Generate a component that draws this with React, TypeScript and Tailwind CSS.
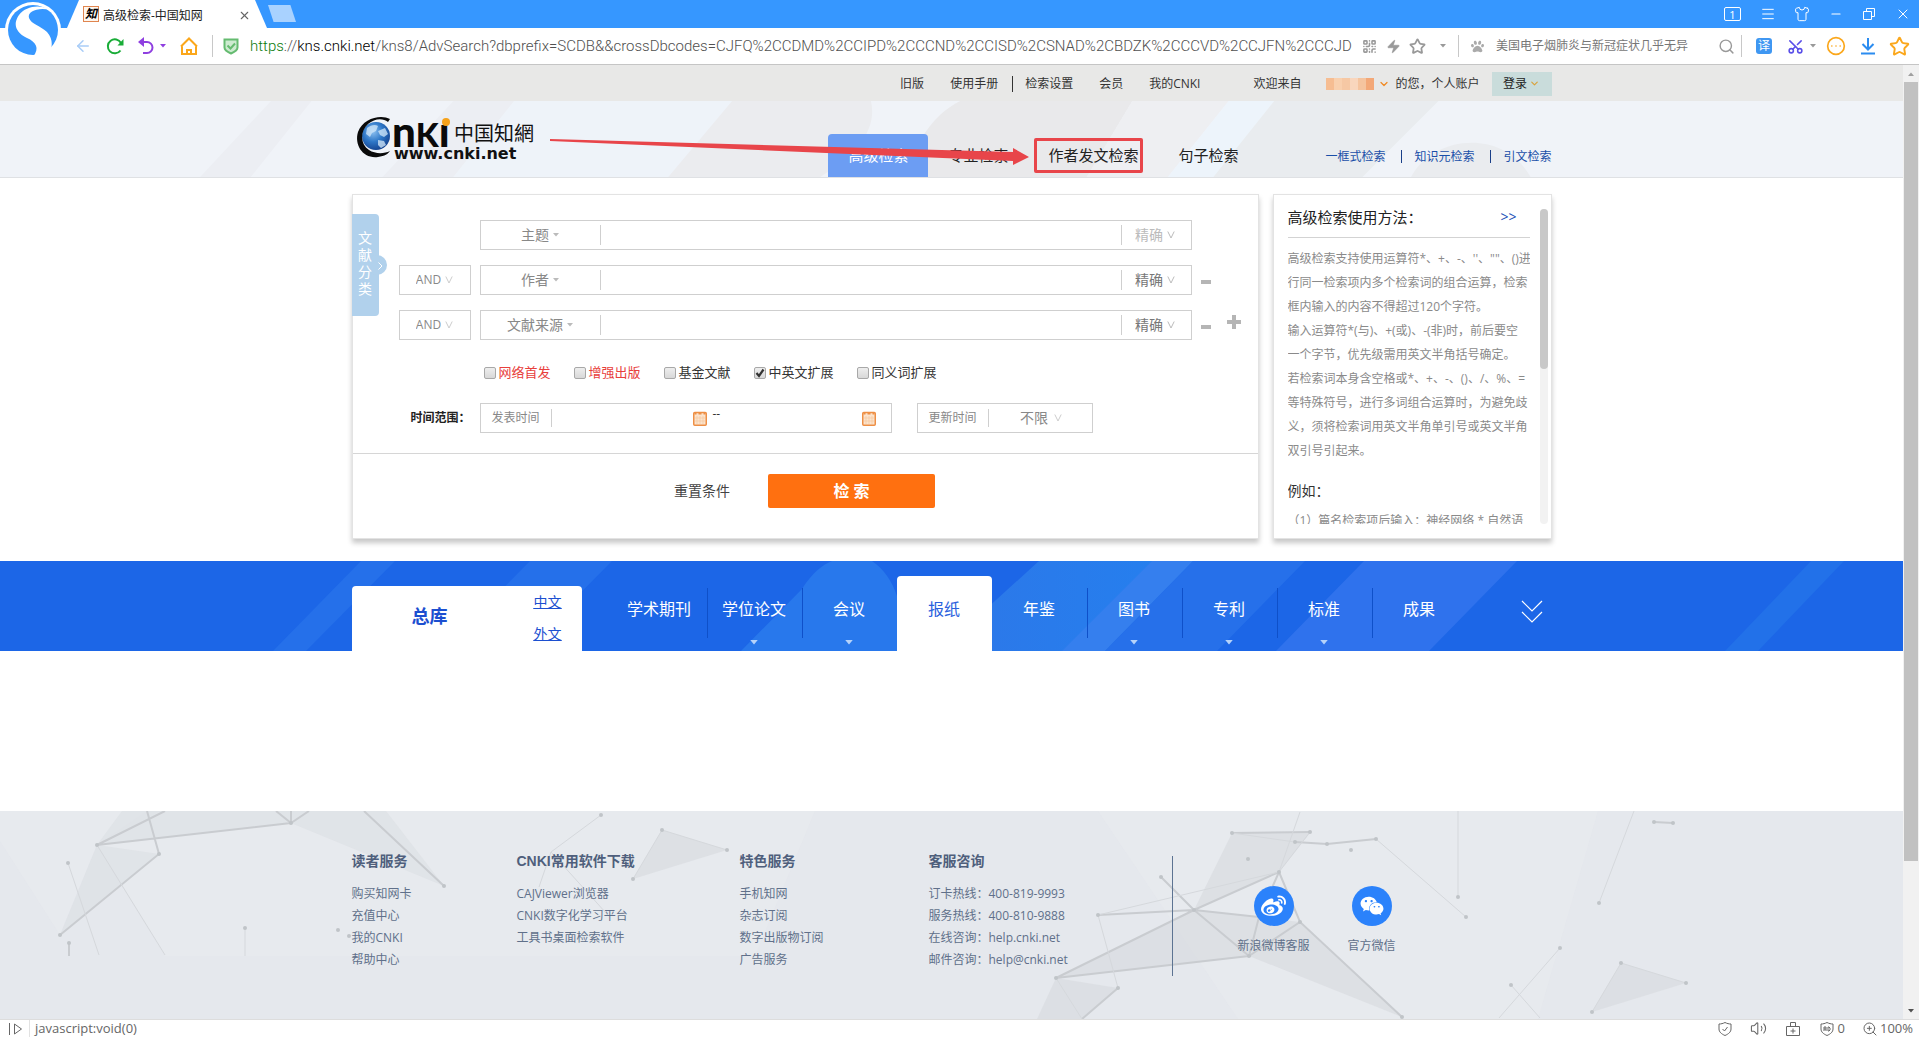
import React from "react";
import {
  ArrowLeft,
  ChevronDown,
  CircleEllipsis,
  Menu,
  Minus,
  QrCode,
  Scissors,
  Search,
  Shirt,
  Star,
  Volume2,
  X,
  Zap,
  ZoomIn,
} from "lucide-react";
import { FaPaw, FaWeibo, FaWeixin } from "react-icons/fa";

const Caret = ({ className = "" }: { className?: string }) => (
  <svg viewBox="0 0 6 4" className={`h-1 w-1.5 ${className}`} fill="currentColor" aria-hidden="true">
    <path d="M0 0h6L3 3.5z" />
  </svg>
);

const Vee = ({ className = "" }: { className?: string }) => (
  <svg viewBox="0 0 8 8" className={`h-2 w-2 ${className}`} fill="none" stroke="currentColor" aria-hidden="true">
    <path d="M.8 .5 4 7 7.200 .5" />
  </svg>
);

const BrowserLogo = () => (
  <svg viewBox="0 0 60 60" className="absolute left-1 top-0.5 z-10 h-[60px] w-[60px]" aria-hidden="true">
    <circle cx="29" cy="28" r="28" fill="#fff" />
    <circle cx="29" cy="28" r="25" fill="#3697ff" />
    <path
      d="M46 8C36 2 22 4 15 13C8 23 13 31 23 36C32 40 36 46 29 55L45 53C48 46 50 38 43 30C37 24 27 22 25 16C23 9 35 5 46 8Z"
      fill="#fff"
    />
  </svg>
);

const Favicon = () => (
  <span className="grid h-4 w-4 place-items-center border border-[#e0854f] bg-[#fdf6ee] text-xs leading-none font-bold text-black italic">
    知
  </span>
);

function TabStrip() {
  return (
    <div className="flex h-7 items-stretch bg-[#3697ff] pl-[67px] text-white">
      <div className="flex w-[200px] items-center bg-white pr-4 pl-4 text-xs text-[#222] [clip-path:polygon(6%_0,94%_0,100%_100%,0_100%)]">
        <Favicon />
        <span className="ml-1 flex-1 pt-1">高级检索-中国知网</span>
        <button aria-label="关闭标签" className="pt-0.5 text-[#666]">
          <X size={13} strokeWidth={2} />
        </button>
      </div>
      <button
        aria-label="新标签"
        className="mt-[5px] ml-px h-[17px] w-7 bg-[#a9d2ff] [clip-path:polygon(0_0,80%_0,100%_100%,20%_100%)]"
      />
      <div className="ml-auto flex items-center pr-2">
        <button className="mr-[19px] grid h-3.5 w-[17px] place-items-center rounded-xs border border-white text-[11px] leading-none">1</button>
        <button aria-label="菜单" className="mr-[18px]"><Menu size={16} strokeWidth={1.5} /></button>
        <button aria-label="皮肤" className="mr-[19px]"><Shirt size={16} strokeWidth={1.5} /></button>
        <button aria-label="最小化" className="mr-5"><Minus size={14} strokeWidth={1.8} /></button>
        <button aria-label="还原" className="mr-5">
          <svg viewBox="0 0 12 12" className="h-3 w-3" fill="none" stroke="currentColor">
            <path d="M.5 3.500h8v8h-8zM3.500 3V.5h8v8H9" />
          </svg>
        </button>
        <button aria-label="关闭"><X size={16} strokeWidth={1.5} /></button>
      </div>
    </div>
  );
}

function AddressBar() {
  return (
    <div className="flex h-9 items-center bg-white pr-[9px] pl-[74px] text-[#999]">
      <button aria-label="后退" className="text-[#a9cdf7]"><ArrowLeft size={18} strokeWidth={2} /></button>
      <button aria-label="刷新" className="ml-3.5">
        <svg viewBox="0 0 18 18" className="h-[18px] w-[18px]" fill="none" stroke="#18ac37" strokeWidth="2">
          <path d="M14.500 13.500A7 7 0 1 1 15 6" />
          <path d="M17.500 2v6.500h-6z" fill="#18ac37" stroke="none" />
        </svg>
      </button>
      <button aria-label="撤销" className="ml-3.5">
        <svg viewBox="0 0 16 18" className="h-[18px] w-4" fill="none" stroke="#8f3fe0" strokeWidth="2">
          <path d="M3 5h6a5 5 0 0 1 0 11H5" />
          <path d="M6 0v10L0 5z" fill="#8f3fe0" stroke="none" />
        </svg>
      </button>
      <Caret className="ml-1.5 text-[#8f3fe0]" />
      <button aria-label="主页" className="ml-3.5">
        <svg viewBox="0 0 18 18" className="h-[18px] w-[18px]" fill="none" stroke="#fba71b" strokeWidth="2">
          <path d="M2 9.500V17h14V9.500M1 9.500l8-8 8 8M7 17v-4h4v4" />
        </svg>
      </button>
      <span className="ml-3.5 h-[22px] w-px bg-[#c8c8c8]" />
      <svg viewBox="0 0 16 17" className="ml-2.5 h-[17px] w-4 shrink-0" fill="#cdebd0" stroke="#65bb70" strokeWidth="2">
        <path d="M1.500 1.500h13v8c0 3-3 4.500-6.500 6-3.500-1.500-6.500-3-6.500-6z" />
        <path d="m4.500 7.500 3 3 4.500-5" fill="none" />
      </svg>
      <div
        role="textbox"
        aria-label="地址"
        tabIndex={0}
        className="ml-[11px] w-0 flex-1 font-[Roboto,sans-serif] text-[15px] font-light whitespace-nowrap text-[#505050]"
      >
        <span className="text-[#0a7a0a]">https</span>://<span className="text-black">kns.cnki.net</span>
        /kns8/AdvSearch?dbprefix=SCDB&amp;&amp;crossDbcodes=CJFQ%2CCDMD%2CCIPD%2CCCND%2CCISD%2CSNAD%2CBDZK%2CCCVD%2CCJFN%2CCCJD
      </div>
      <button aria-label="二维码" className="ml-1.5"><QrCode size={15} strokeWidth={2.500} /></button>
      <button aria-label="加速" className="ml-[9px]"><Zap size={15} fill="currentColor" strokeWidth={1} /></button>
      <button aria-label="收藏" className="ml-2"><Star size={17} strokeWidth={2.500} /></button>
      <Caret className="ml-3.5" />
      <span className="ml-3 h-[22px] w-px bg-[#c8c8c8]" />
      <FaPaw size={13} className="ml-3 text-[#aaa]" />
      <input
        aria-label="搜索"
        defaultValue="美国电子烟肺炎与新冠症状几乎无异"
        className="ml-3 w-[222px] text-xs text-[#777] outline-none"
      />
      <button aria-label="搜索"><Search size={17} strokeWidth={2} /></button>
      <span className="ml-1.5 h-[22px] w-px bg-[#c8c8c8]" />
      <button className="ml-3.5 grid h-4 w-4 place-items-center rounded-[3px] bg-[#3f97f2] text-xs leading-none text-white">译</button>
      <button aria-label="截图" className="ml-[15px] -rotate-90 text-[#5a4fe8]"><Scissors size={17} strokeWidth={2.200} /></button>
      <Caret className="ml-1.5" />
      <button aria-label="消息" className="ml-2.5 text-[#fba71b]"><CircleEllipsis size={20} strokeWidth={2} /></button>
      <button aria-label="下载" className="ml-3.5">
        <svg viewBox="0 0 16 18" className="h-[18px] w-4" fill="none" stroke="#2b8cf0" strokeWidth="2">
          <path d="M8 1v11M2.500 7 8 12.500 13.500 7M1 16.500h14" />
        </svg>
      </button>
      <button aria-label="收藏夹" className="ml-[13px] text-[#fba71b]"><Star size={21} strokeWidth={2.200} /></button>
    </div>
  );
}

const mosaic = ["bg-[#f6bd92]", "bg-[#f9d0ae]", "bg-[#f6c8a4]", "bg-[#f9d6bd]", "bg-[#f5c49f]", "bg-[#f3a878]"];

function UserBar() {
  return (
    <div className="bg-[#e8e8e7] text-xs text-[#333]">
      <nav className="mx-auto flex h-9 max-w-[1200px] items-center justify-end pt-px">
        <a href="#old">旧版</a>
        <a href="#manual" className="ml-[26px]">使用手册</a>
        <span className="mr-3 ml-3.5 h-4 w-px bg-[#333]" />
        <a href="#settings">检索设置</a>
        <a href="#member" className="ml-[26px]">会员</a>
        <a href="#mine" className="ml-[26px]">我的CNKI</a>
        <span className="ml-[53px]">欢迎来自</span>
        <span className="ml-[25px] flex h-3 w-12">
          {mosaic.map((c) => <span key={c} className={`flex-1 ${c}`} />)}
        </span>
        <ChevronDown size={12} strokeWidth={2.500} className="mr-[5px] ml-1 text-[#f08a24]" />
        <span className="mr-3">的您，个人账户</span>
        <button className="flex h-6 w-[60px] items-center justify-center bg-[#c9dcdb] text-[#222]">
          登录
          <ChevronDown size={11} strokeWidth={2.500} className="ml-0.5 text-[#d9a23a]" />
        </button>
      </nav>
    </div>
  );
}

const CnkiLogo = () => (
  <svg viewBox="0 -13 184 66" className="h-[66px] w-[184px]" role="img" aria-label="CNKI 中国知网">
    <defs>
      <radialGradient id="globe" cx="40%" cy="35%" r="70%">
        <stop offset="0" stopColor="#8cc0f0" />
        <stop offset=".5" stopColor="#2f78c8" />
        <stop offset="1" stopColor="#123f8c" />
      </radialGradient>
    </defs>
    <circle cx="22" cy="20" r="14" fill="url(#globe)" />
    <path d="M13 12c4-3 8-4 11-2l-2 5-4 2-2 4-4-3zM24 15l7-3 3 6-4 3-4-2zM24 24l6 1 2 4-5 3-3-3z" fill="#d5e9fa" opacity=".75" />
    <path d="M36 3C27-2 9 2 4 16C0 29 9 43 24 41C31 40 34 38 36 35C30 38 21 38 15 34C6 28 6 15 14 8C21 2 29 2 34 6Z" fill="#0a0a0a" />
    <text x="38" y="31" fontSize="42" fontFamily="Lato, sans-serif" fontWeight="900" fill="#0a0a0a">
      n<tspan fontSize="33">K</tspan>ı
    </text>
    <circle cx="92" cy="6" r="4" fill="#f6a21a" />
    <text x="100" y="25" fontSize="20" fontFamily="Noto Sans CJK SC, sans-serif" fill="#111">中国知網</text>
    <text x="40" y="43" fontSize="16" fontWeight="bold" fontFamily="DejaVu Sans, sans-serif" fill="#111">
      www.cnki.net
    </text>
  </svg>
);

function SiteHeader() {
  return (
    <header className="relative border-b border-[#dfe1e4] bg-[#f0f3f8]">
      <svg viewBox="0 0 1903 75" preserveAspectRatio="xMidYMid slice" className="absolute inset-0 h-full w-full" aria-hidden="true">
        <path d="M280 0h40l-60 75h-50zM460 0h60l-60 75h-70z" fill="#eceef3" />
        <path d="M520 0h215l-63 75H460z" fill="#eef3f9" />
        <path d="M735 0h137c6 26-10 50-50 75H672z" fill="#ebecef" />
        <path d="M960 0h170l-45 75H905c10-30 25-60 55-75z" fill="#e9e9eb" />
        <path d="M1130 0h95l-60 75h-80z" fill="#eeeff2" />
        <path d="M1225 0h45l-60 75h-45z" fill="#edf4fb" />
        <path d="M1270 0h162l-75 75H1210z" fill="#e9ecef" />
        <path d="M1405 75c20-40 90-50 118 0z" fill="#eaecef" />
      </svg>
      <div className="relative mx-auto flex h-[76px] max-w-[1200px] items-start">
        <a href="#home" className="mt-0.5 ml-0.5"><CnkiLogo /></a>
        <nav className="ml-auto flex items-end self-end text-[15px] text-[#222]">
          <button className="h-[43px] w-[100px] rounded-t-sm bg-[#6c9df3] text-white">高级检索</button>
          <button className="h-[43px] w-[100px]">专业检索</button>
          <button className="relative h-[43px] w-[130px]">
            作者发文检索
            <span className="absolute top-1 left-1.5 h-[35px] w-[109px] rounded-xs border-[3px] border-[#e8454a]" />
          </button>
          <button className="h-[43px] w-[100px]">句子检索</button>
        </nav>
        <nav className="ml-[67px] flex h-[43px] items-center self-end pt-0.5 text-xs text-[#1a4fa8]">
          <a href="#one">一框式检索</a>
          <span className="mr-3 ml-4 h-[13px] w-px bg-[#1a3f88]" />
          <a href="#knowledge">知识元检索</a>
          <span className="mr-3 ml-4 h-[13px] w-px bg-[#1a3f88]" />
          <a href="#citation">引文检索</a>
        </nav>
        <svg viewBox="0 0 480 28" className="pointer-events-none absolute top-9 left-[198px] h-7 w-[480px]" aria-hidden="true">
          <path d="M0 2L463 15V11L479 20L463 28V24L0 4Z" fill="#e8454a" />
        </svg>
      </div>
    </header>
  );
}

interface RowProps {
  field: string;
  first?: boolean;
  last?: boolean;
}

const fields = ["主题", "作者", "文献来源"];
const selectClass = "field-sizing-content appearance-none bg-transparent outline-none";

function QueryRow({ field, first, last }: RowProps) {
  return (
    <div className="flex h-[30px] items-stretch">
      {first ? (
        <span className="w-[72px]" />
      ) : (
        <label className="flex w-[72px] items-center justify-center border border-[#cfcfcf] text-xs text-[#888]">
          <select aria-label="逻辑关系" className={`${selectClass} font-['Open_Sans',sans-serif]`}>
            <option>AND</option>
            <option>OR</option>
            <option>NOT</option>
          </select>
          <Vee className="ml-1 text-[#ccc]" />
        </label>
      )}
      <div className="ml-[9px] flex flex-1 items-center border border-[#cfcfcf] text-sm text-[#888]">
        <label className="flex w-[119px] items-center justify-center">
          <select aria-label="检索项" defaultValue={field} className={selectClass}>
            {fields.map((f) => <option key={f}>{f}</option>)}
          </select>
          <Caret className="ml-1 text-[#bbb]" />
        </label>
        <input aria-label={field} className="h-5 min-w-0 flex-1 border-x border-[#cfcfcf] px-2 outline-none" />
        <label className={`flex w-[69px] items-center justify-center pr-0.5 ${first ? "text-[#bbb]" : "text-[#777]"}`}>
          <select aria-label="匹配方式" className={selectClass}>
            <option>精确</option>
            <option>模糊</option>
          </select>
          <Vee className="ml-1 text-[#bbb]" />
        </label>
      </div>
      <div className="flex w-[66px] items-start pl-[9px] text-[#b5b5b5]">
        {!first && (
          <button aria-label="删除一行" className="mt-3.5 grid h-1.5 w-2.5 place-items-center">
            <span className="h-1 w-2.5 bg-current" />
          </button>
        )}
        {last && (
          <button aria-label="增加一行" className="mt-[5px] ml-4">
            <svg viewBox="0 0 14 14" className="h-3.5 w-3.5" fill="currentColor"><path d="M5 0h4v5h5v4H9v5H5V9H0V5h5z" /></svg>
          </button>
        )}
      </div>
    </div>
  );
}

const checks = [
  { label: "网络首发", red: true },
  { label: "增强出版", red: true },
  { label: "基金文献" },
  { label: "中英文扩展", on: true },
  { label: "同义词扩展" },
];

const CalendarIcon = () => (
  <svg viewBox="0 0 14 15" className="h-[15px] w-3.5" fill="#fbe3cd" stroke="#ee8f45" aria-hidden="true">
    <rect x=".75" y="1.500" width="12.500" height="12.750" rx="1" strokeWidth="1.500" />
    <path d="M1.500 2.500h2M5.500 2.500h3M10.500 2.500h2" strokeWidth="2" />
    <path d="M4 5v8M7 5v8M10 5v8M2 7h10M2 10h10" stroke="#f6c79d" strokeWidth=".7" />
  </svg>
);

function SearchCard() {
  return (
    <form className="relative min-w-0 flex-1 border border-[#e3e3e3] bg-white shadow-[0_4px_5px_rgba(0,0,0,0.22)]" onSubmit={(e) => e.preventDefault()}>
      <button type="button" className="absolute top-[19px] -left-px isolate flex h-[102px] w-[27px] flex-col items-center justify-center rounded-r-sm bg-[#b1d1ec] pb-1 text-sm leading-[17px] text-white">
        <span>文</span><span>献</span><span>分</span><span>类</span>
        <span className="absolute top-[41px] -right-2 -z-10 h-5 w-5 rounded-full bg-[#b1d1ec]" />
        <svg viewBox="0 0 5 8" className="absolute top-12 -right-1 h-2 w-[5px]" fill="none" stroke="#fff" aria-hidden="true"><path d="M.5.5 4 4 .5 7.500" /></svg>
      </button>
      <div className="flex flex-col gap-[15px] pt-[25px] pl-[46px]">
        <QueryRow field="主题" first />
        <QueryRow field="作者" />
        <QueryRow field="文献来源" last />
      </div>
      <div className="mt-[23px] ml-[131px] flex h-5 items-center gap-[23px]">
        {checks.map((c) => (
          <label key={c.label} className={`flex items-center gap-[3px] text-[13px] ${c.red ? "text-[#e8403c]" : "text-[#333]"}`}>
            <span className="relative h-3 w-3">
              <input
                type="checkbox"
                defaultChecked={c.on}
                className="peer block h-3 w-3 appearance-none rounded-xs border border-[#a8a8a8] bg-linear-to-b from-[#eee] to-[#d8d8d8]"
              />
              <svg viewBox="0 0 12 12" className="pointer-events-none absolute inset-0 hidden h-3 w-3 peer-checked:block" fill="none" stroke="#333" strokeWidth="2.200">
                <path d="m2.500 6 2.500 3 4.500-6.500" />
              </svg>
            </span>
            {c.label}
          </label>
        ))}
      </div>
      <div className="mt-5 flex h-[30px] items-stretch text-xs text-[#888]">
        <span className="flex w-[127px] items-center justify-end pr-2 font-bold text-[#222]"><span className="w-[61px]">时间范围：</span></span>
        <div className="flex w-[412px] items-center border border-[#cfcfcf]">
          <label htmlFor="from" className="w-[71px] border-r border-[#cfcfcf] pl-[11px] leading-[18px]">发表时间</label>
          <input id="from" className="w-[141px] outline-none" />
          <CalendarIcon />
          <span className="ml-1.5 w-3 pb-2 text-[#333]">--</span>
          <input aria-label="结束时间" className="min-w-0 flex-1 outline-none" />
          <span className="mr-[15px]"><CalendarIcon /></span>
        </div>
        <div className="ml-[25px] flex w-[176px] items-center border border-[#cfcfcf]">
          <label htmlFor="updated" className="w-[71px] border-r border-[#cfcfcf] pl-[11px] leading-[18px]">更新时间</label>
          <span className="flex flex-1 items-center justify-center pl-0.5 text-sm">
            <select id="updated" className={selectClass}>
              <option>不限</option>
              <option>最近一周</option>
            </select>
            <Vee className="ml-1.5 text-[#ccc]" />
          </span>
        </div>
      </div>
      <div className="mt-5 flex items-center justify-center gap-[38px] border-t border-[#d6d6d6] pt-5 pb-[30px]">
        <button type="reset" className="text-sm text-[#444]">重置条件</button>
        <button type="submit" className="mr-px h-[34px] w-[167px] rounded-xs bg-[#ff7010] text-base font-bold text-white">检 索</button>
      </div>
    </form>
  );
}

const help = [
  "高级检索支持使用运算符*、+、-、''、\"\"、()进",
  "行同一检索项内多个检索词的组合运算，检索",
  "框内输入的内容不得超过120个字符。",
  "输入运算符*(与)、+(或)、-(非)时，前后要空",
  "一个字节，优先级需用英文半角括号确定。",
  "若检索词本身含空格或*、+、-、()、/、%、=",
  "等特殊符号，进行多词组合运算时，为避免歧",
  "义，须将检索词用英文半角单引号或英文半角",
  "双引号引起来。",
];

function HelpCard() {
  return (
    <aside className="flex h-[345px] w-[279px] border border-[#e3e3e3] bg-white pt-2.5 pr-[3px] pb-3.5 pl-3.5 shadow-[0_4px_5px_rgba(0,0,0,0.22)]">
      <div className="w-[242px] overflow-hidden">
        <div className="flex h-[33px] items-start justify-between border-b border-[#d3d3d3] pr-[13px] leading-6">
          <h2 className="text-[15px] text-[#222]">高级检索使用方法：</h2>
          <a href="#help" className="font-['Open_Sans',sans-serif] text-sm leading-6 text-[#1a4fb8]">&gt;&gt;</a>
        </div>
        <div className="mt-[9px] text-xs leading-6 whitespace-nowrap text-[#8a8a8a]">
          {help.map((l) => <p key={l}>{l}</p>)}
        </div>
        <h3 className="mt-4 text-sm leading-6 text-[#333]">例如：</h3>
        <p className="mt-1.5 text-xs leading-6 whitespace-nowrap text-[#8a8a8a]">（1）篇名检索项后输入：神经网络 * 自然语</p>
      </div>
      <div className="mt-1 ml-auto w-2 rounded bg-[#f2f2f2]"><div className="h-40 rounded bg-[#c8c8c8]" /></div>
    </aside>
  );
}

const databases = [
  { name: "学术期刊" },
  { name: "学位论文", more: true },
  { name: "会议", more: true },
  { name: "报纸", active: true },
  { name: "年鉴" },
  { name: "图书", more: true },
  { name: "专利", more: true },
  { name: "标准", more: true },
  { name: "成果" },
];

function DatabaseNav() {
  return (
    <nav className="relative mt-[22px] h-[90px] bg-[#1c66e7]">
      <svg viewBox="0 0 1903 90" preserveAspectRatio="xMidYMid slice" className="absolute inset-0 h-full w-full" aria-hidden="true">
        <defs>
          <linearGradient id="glow" x1="0" x2="1"><stop offset="0" stopColor="#2d77e8" /><stop offset="1" stopColor="#2480ef" /></linearGradient>
        </defs>
        <path d="M361 0h34l-89 90h-33zM530 0h82l-89 90h-82z" fill="#2570ea" />
        <path d="M741 90L802 28C812 12 822 4 832 0H872C884 8 892 20 897 35V90Z" fill="#2878ec" />
        <path d="M1039 0h154l-88 90H940z" fill="url(#glow)" />
        <path d="M1152 0h41l-88 90h-43z" fill="#357fee" />
        <path d="M1193 0h112l-88 90h-112z" fill="#2670ea" />
        <path d="M1364 0h153l-88 90h-153z" fill="#2f72ed" />
        <path d="M1811 0h33l-86 90h-33z" fill="#2271e9" />
      </svg>
      <div className="relative mx-auto flex h-full max-w-[1200px] items-end">
        <div className="flex h-[65px] w-[230px] justify-between rounded-t-sm bg-white pr-5 pl-[60px] text-[#1c4fd0]">
          <a href="#all" className="pt-4 text-lg font-bold">总库</a>
          <div className="flex flex-col gap-3 pt-1.5 text-sm leading-5 underline">
            <a href="#zh">中文</a>
            <a href="#foreign">外文</a>
          </div>
        </div>
        <ul className="ml-[30px] flex items-end text-base text-white">
          {databases.map((d, i) => (
            <li key={d.name} className={`relative w-[95px] text-center ${d.active ? "h-[75px] rounded-t-sm bg-white text-[#2b62dd]" : "h-[75px]"}`}>
              <a href={`#db${i}`} className="block pt-[21px] leading-6">{d.name}</a>
              {i < 8 && !d.active && i !== 2 && <span className="absolute top-3 -right-px h-[50px] w-px bg-[#0f50c9]" />}
              {d.more && <Caret className="absolute bottom-1.5 left-1/2 h-[5px] w-2 -translate-x-1/2 text-[#b5d2fa]" />}
            </li>
          ))}
        </ul>
        <button aria-label="展开" className="mr-[9px] mb-[27px] ml-auto">
          <svg viewBox="0 0 22 24" className="h-6 w-[22px]" fill="none" stroke="#fff" strokeWidth="1.200"><path d="M1 1l10 10L21 1M1 12l10 10 10-10" /></svg>
        </button>
      </div>
    </nav>
  );
}

const columns = [
  { title: "读者服务", width: "w-[165px]", items: ["购买知网卡", "充值中心", "我的CNKI", "帮助中心"] },
  { title: "CNKI常用软件下载", width: "w-[223px]", items: ["CAJViewer浏览器", "CNKI数字化学习平台", "工具书桌面检索软件"] },
  { title: "特色服务", width: "w-[189px]", items: ["手机知网", "杂志订阅", "数字出版物订阅", "广告服务"] },
  { title: "客服咨询", width: "w-[243px]", items: ["订卡热线：400-819-9993", "服务热线：400-810-9888", "在线咨询：help.cnki.net", "邮件咨询：help@cnki.net"] },
];

const dots = [
  [97, 34], [159, 43], [291, 12], [60, 124], [69, 132], [444, 75], [245, 117], [338, 119], [349, 125], [662, 19], [727, 39], [633, 68], [601, 4],
  [1232, 22], [1310, 21], [1295, 31], [1327, 33], [1376, 28], [1279, 61], [1194, 99], [1098, 104], [1161, 66], [1300, 111], [1249, 145],
  [1056, 167], [1118, 177], [1402, 206], [1599, 92], [1654, 11], [1673, 12], [1621, 152], [1686, 172], [1592, 201], [1560, 137], [1511, 174],
  [1351, 39], [1466, 106], [1458, 86], [1248, 48], [68, 52],
];

function SiteFooter() {
  return (
    <footer className="relative bg-[#e5e8ed]">
      <svg viewBox="0 0 1903 208" preserveAspectRatio="xMidYMid slice" className="absolute inset-0 h-full w-full" aria-hidden="true">
        <path d="M0 0h147L97 34 60 124 0 30zM165 0h650l-60 145H165L97 34zM1098 0h500l-60 208h-300z" fill="#e9ecf0" opacity=".5" />
        <path d="M122 0h170v12L97 34zM97 34l62 9-99 81zM276 0h110l58 75L291 12z" fill="#dadde1" opacity=".5" />
        <path d="M662 19l65 20-94 29zM1621 152l65 20-94 29zM1232 22h78l-31 39-85 38zM1194 99l106 12-51 34-193 22zM1056 167l62 10-36 31h-45zM1300 111l102 95-153-61z" fill="#d8dbdf" opacity=".7" />
        <g fill="none" stroke="#c9ccd0" strokeWidth="2">
          <path d="M165 0L97 34 291 12M147 0l12 43L60 124M276 0l15 12 18-12M291 12V0M364 0l80 75M69 132v13" />
          <path d="M1232 22l78-1M1295 31l32 2 49-5M1161 66l33 33 85-38M1098 104l96-5 65 7M1194 99l55 46-193 22zM1279 61l21 50 102 95M1300 111l-51 34M1118 177l-36 31M1279 61l-20 45-10 39M1654 11l19 1" />
        </g>
        <g fill="none" stroke="#d5d8dc">
          <path d="M97 34l68 110M68 52l31 92M245 117v28M601 4l-50 37-12 35M551 41l55 61M727 39l-65-20-29 49M1376 28l90 78M1458 0v86M1634 0l-35 92M1686 172l-65-20-29 49M1560 137l-61 70M1511 174l29 33M1098 104l20 73M1056 167l26 41M1310 21l-31 40M1232 22l63 9M1098 104l181-43M1279 61l21-60" />
        </g>
        <g fill="#c0c4c8">{dots.map(([x, y]) => <circle key={`${x}-${y}`} cx={x} cy={y} r="2" />)}</g>
      </svg>
      <div className="relative mx-auto flex h-[208px] max-w-[1200px] pt-10 text-xs text-[#60708a]">
        {columns.map((c) => (
          <section key={c.title} className={c.width}>
            <h2 className="mb-3 font-['Liberation_Sans','Noto_Sans_CJK_SC',sans-serif] text-sm leading-5 font-bold text-[#4f5f7c]">{c.title}</h2>
            <ul className="leading-[22px]">
              {c.items.map((t) => <li key={t}><a href="#footer">{t}</a></li>)}
            </ul>
          </section>
        ))}
        <span className="mt-[5px] h-[120px] w-px bg-[#5c7392]" />
        <div className="ml-[65px] flex gap-[38px] pt-[35px]">
          <a href="#weibo" className="flex flex-col items-center gap-[11px] leading-[18px]">
            <span className="grid h-10 w-10 place-items-center rounded-full bg-[#2b82fb] text-white"><FaWeibo size={25} /></span>
            新浪微博客服
          </a>
          <a href="#wechat" className="flex flex-col items-center gap-[11px] leading-[18px]">
            <span className="grid h-10 w-10 place-items-center rounded-full bg-[#2b82fb] text-white"><FaWeixin size={24} /></span>
            官方微信
          </a>
        </div>
      </div>
    </footer>
  );
}

const ShieldIcon = ({ children }: { children: React.ReactNode }) => (
  <svg viewBox="0 0 14 14" className="h-3.5 w-3.5" fill="none" stroke="currentColor" aria-hidden="true">
    <path d="M7 .5c2 1 4 1.500 6 1.500v5c0 3-2.500 5-6 6.500C3.500 12 1 10 1 7V2c2 0 4-.5 6-1.500z" />
    {children}
  </svg>
);

function StatusBar() {
  return (
    <div className="flex h-5 items-center border-t border-[#ddd] bg-white pr-1.5 pb-0.5 pl-2 font-['Open_Sans',sans-serif] text-[13px] leading-[17px] text-[#666]">
      <svg viewBox="0 0 16 12" className="h-3 w-4" fill="none" stroke="currentColor" aria-hidden="true"><path d="M1.500 0v12M6.500 1v10l7-5z" /></svg>
      <span className="mx-[5px] h-full w-px bg-[#e2e2e2]" />
      <span>javascript:void(0)</span>
      <div className="ml-auto flex items-center">
        <ShieldIcon><path d="m4.500 7 2 2 3-4" /></ShieldIcon>
        <Volume2 size={17} strokeWidth={1.500} className="ml-[18px]" />
        <svg viewBox="0 0 14 14" className="ml-[19px] h-3.5 w-3.5" fill="none" stroke="currentColor" aria-hidden="true">
          <path d="M.5 4.500h13v9H.5zM4.500 4.500v-4h5v4M7 6.500v5M4.500 9h5" />
        </svg>
        <span className="ml-5 flex items-center gap-1"><ShieldIcon><path d="M4 9V5h2v4M4 7h2M8 5v4h1l1-1V6L9 5z" /></ShieldIcon>0</span>
        <ZoomIn size={16} strokeWidth={1.500} className="ml-[17px]" />
        <span className="ml-0.5">100%</span>
      </div>
    </div>
  );
}

export default function App() {
  return (
    <div className="relative flex min-h-screen flex-col bg-white font-['Open_Sans','Noto_Sans_CJK_SC',sans-serif]">
      <BrowserLogo />
      <TabStrip />
      <AddressBar />
      <div className="flex flex-1 border-t border-[#c5c5c5]">
        <div className="flex min-w-0 flex-1 flex-col">
          <UserBar />
          <SiteHeader />
          <main className="flex-1">
            <div className="mx-auto mt-4 flex max-w-[1200px] items-start gap-3.5">
              <SearchCard />
              <HelpCard />
            </div>
            <DatabaseNav />
          </main>
          <SiteFooter />
        </div>
        <div className="flex w-4 flex-col items-center bg-[#f1f1f1] text-[#505050]">
          <span className="grid h-[17px] place-items-center"><Caret className="rotate-180 text-[#a0a0a0]" /></span>
          <span className="h-[779px] w-3.5 bg-[#c1c1c1]" />
          <span className="mt-auto grid h-[17px] place-items-center"><Caret /></span>
        </div>
      </div>
      <StatusBar />
    </div>
  );
}
